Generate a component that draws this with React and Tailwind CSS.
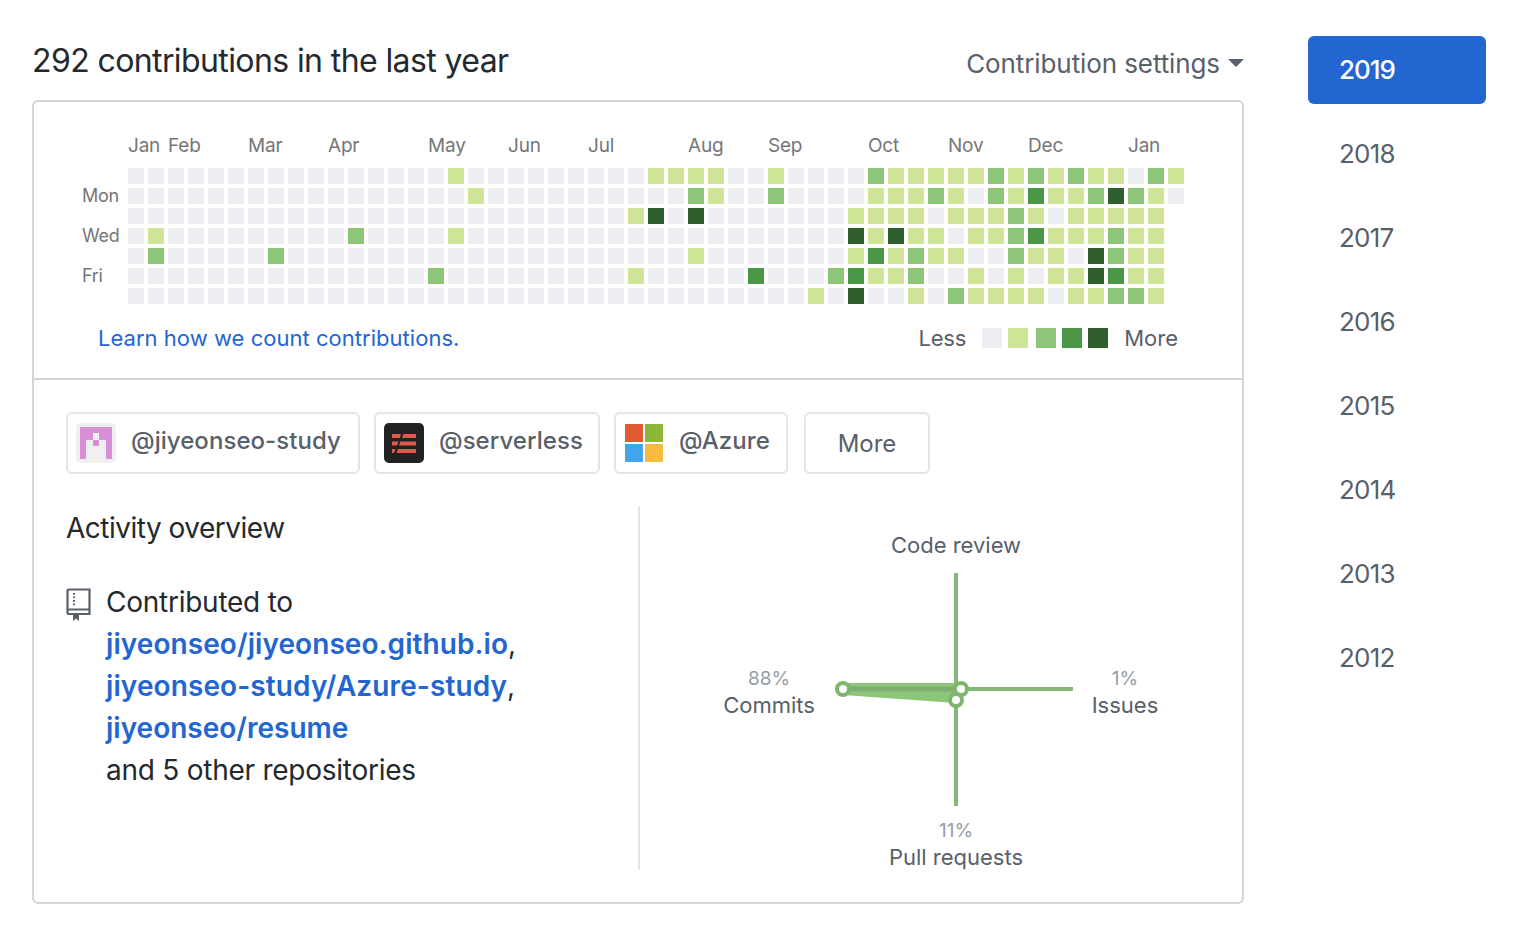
const LEVELS = ["bg-[#ecedf1]", "bg-[#cfe496]", "bg-[#8dc679]", "bg-[#4b9748]", "bg-[#2e5f2c]"];

const ROWS = [
  "0000000000000000100000000" + "0111100100" + "0021111121" + "21211021",
  "0000000000000000010000000" + "0002100200" + "0011121021" + "31124210",
  "0000000000000000000000000" + "1404000000" + "0111101112" + "1011111",
  "0100000000020000100000000" + "0000000000" + "0414110112" + "3111211",
  "0200000200000000000000000" + "0001000000" + "0131211002" + "1104211",
  "0000000000000002000000000" + "1000003000" + "2311200101" + "0114311",
  "0000000000000000000000000" + "0000000001" + "0400102111" + "1011221",
];

const MONTHS = [
  ["Jan", "w-[40px]"], ["Feb", "w-[80px]"], ["Mar", "w-[80px]"], ["Apr", "w-[100px]"],
  ["May", "w-[80px]"], ["Jun", "w-[80px]"], ["Jul", "w-[100px]"], ["Aug", "w-[80px]"],
  ["Sep", "w-[100px]"], ["Oct", "w-[80px]"], ["Nov", "w-[80px]"], ["Dec", "w-[100px]"], ["Jan", "w-[40px]"],
];

const DAYS = ["", "Mon", "", "Wed", "", "Fri", ""];
const YEARS = ["2018", "2017", "2016", "2015", "2014", "2013", "2012"];
const IDENT = ["11111", "11011", "10101", "10001", "10001"];

function Identicon() {
  return (
    <div className="w-[40px] h-[40px] rounded-[5px] bg-[#f0f0f0] p-[4px] grid grid-cols-5 grid-rows-5">
      {IDENT.join("").split("").map((c, i) => (
        <div key={i} className={c === "1" ? "bg-[#d98fd8]" : ""} />
      ))}
    </div>
  );
}

function ServerlessLogo() {
  return (
    <svg width="40" height="40" viewBox="0 0 40 40">
      <rect width="40" height="40" rx="5" fill="#222222" />
      <g fill="#e0594a">
        <path d="M8 11h9l-1.500 4H8z" />
        <path d="M19.500 11H32v4H18z" />
        <path d="M8 18.500h6.500L13 22.500H8z" />
        <path d="M16.500 18.500H32v4H15z" />
        <path d="M8 26h3.500L10 30H8z" />
        <path d="M14 26H32v4H12.500z" />
      </g>
    </svg>
  );
}

function MicrosoftLogo() {
  return (
    <div className="w-[40px] h-[40px] p-[1px] grid grid-cols-2 gap-[2px]">
      <div className="bg-[#e25a34]" />
      <div className="bg-[#8db63a]" />
      <div className="bg-[#45a4ec]" />
      <div className="bg-[#f7bb41]" />
    </div>
  );
}

function RepoIcon() {
  return (
    <svg width="26" height="34" viewBox="0 0 26 34" fill="none">
      <path d="M3 1.500H23.500V26H3C2 26 1.500 25.500 1.500 24.500V3C1.500 2 2 1.500 3 1.500Z" stroke="#586069" strokeWidth="2.200" />
      <path d="M1.500 21.500H23.500" stroke="#586069" strokeWidth="2" />
      <path d="M7 25H13V33L10 30.500L7 33Z" fill="#586069" />
      <path d="M8 5v1.800M8 8.500v1.800M8 12v1.800M8 15.500v1.800" stroke="#586069" strokeWidth="2" />
    </svg>
  );
}

function Radar() {
  return (
    <svg width="604" height="364" viewBox="0 0 604 364" className="block" fontFamily="Inter, 'Liberation Sans', sans-serif">
      <g stroke="#85b878" strokeWidth="4" fill="none">
        <path d="M316 67V300" />
        <path d="M203 183H433" />
      </g>
      <path d="M203 177 H321 V183 L316 197 L203 189 Z" fill="#8cc677" />
      <path d="M203 183H321" stroke="#7fae70" strokeWidth="5" />
      <circle cx="203" cy="183" r="6" fill="#fff" stroke="#7fb56f" strokeWidth="4" />
      <circle cx="321" cy="183" r="6" fill="#fff" stroke="#7fb56f" strokeWidth="4" />
      <circle cx="316" cy="194" r="6" fill="#fff" stroke="#7fb56f" strokeWidth="4" />
      <g textAnchor="middle" fontSize="22" fill="#586069">
        <text x="316" y="47">Code review</text>
        <text x="129" y="207">Commits</text>
        <text x="485" y="207">Issues</text>
        <text x="316" y="359">Pull requests</text>
      </g>
      <g textAnchor="middle" fontSize="19" fill="#959da5">
        <text x="129" y="179">88%</text>
        <text x="485" y="179">1%</text>
        <text x="316" y="331">11%</text>
      </g>
    </svg>
  );
}

function OrgButton({ logo, name, width }) {
  return (
    <div className={`h-[62px] ${width} border-2 border-[#e1e4e8] rounded-[6px] flex items-center gap-[15px] pl-[8px] text-[24px] font-medium tracking-[0.05px] text-[#586069]`}>
      {logo}
      <span className="pb-[4px]">{name}</span>
    </div>
  );
}

export default function App() {
  return (
    <div className="w-[1536px] h-[930px] bg-white flex pl-[32px] pt-[36px] text-[#24292e] font-['Inter','Liberation_Sans',sans-serif] overflow-hidden">
      <div className="w-[1212px] shrink-0">
        <div className="h-[64px] pb-[12px] flex items-center justify-between">
          <h2 className="text-[32px] font-normal leading-[50px] tracking-[-0.6px] pb-[2px]">292 contributions in the last year</h2>
          <div className="flex items-center gap-[8px] text-[26px] text-[#586069] tracking-[-0.1px] pt-[2px]">
            Contribution settings
            <span className="w-0 h-0 border-x-[8px] border-x-transparent border-t-[8px] border-t-[#586069]" />
          </div>
        </div>
        <div className="border-2 border-[#d1d5da] rounded-[6px] h-[804px]">
          <div className="h-[278px] border-b-2 border-[#d1d5da] pt-[29px] text-[#767676]">
            <div className="flex pl-[94px] h-[30px] items-center text-[19px] tracking-[-0.2px] mb-[7px]">
              {MONTHS.map(([m, w], i) => (
                <div key={i} className={w}>{m}</div>
              ))}
            </div>
            <div className="flex pl-[48px]">
              <div className="w-[46px] flex flex-col text-[18px] tracking-[-0.3px]">
                {DAYS.map((d, i) => (
                  <div key={i} className="h-[20px] leading-[16px] whitespace-nowrap">{d}</div>
                ))}
              </div>
              <div className="flex flex-col gap-[4px]">
                {ROWS.map((r, y) => (
                  <div key={y} className="flex gap-[4px]">
                    {r.split("").map((c, x) => (
                      <div key={x} className={`w-[16px] h-[16px] ${LEVELS[Number(c)]}`} />
                    ))}
                  </div>
                ))}
              </div>
            </div>
            <div className="flex items-center justify-between pl-[64px] pr-[64px] mt-[12px] h-[36px] text-[22px]">
              <a className="text-[#2366d1] tracking-[0.03px]">Learn how we count contributions.</a>
              <div className="flex items-center text-[#586069]">
                <span className="mr-[16px] tracking-[-0.2px]">Less</span>
                <div className="flex gap-[6px] mr-[16px]">
                  {LEVELS.map((l, i) => (
                    <div key={i} className={`w-[20px] h-[20px] ${l} ${i === 2 ? "ml-[2px]" : ""}`} />
                  ))}
                </div>
                <span>More</span>
              </div>
            </div>
          </div>
          <div className="pl-[32px] pt-[32px]">
            <div className="flex gap-[14px]">
              <OrgButton logo={<Identicon />} name="@jiyeonseo-study" width="w-[294px]" />
              <OrgButton logo={<ServerlessLogo />} name="@serverless" width="w-[226px]" />
              <OrgButton logo={<MicrosoftLogo />} name="@Azure" width="w-[174px]" />
              <div className="h-[62px] w-[126px] ml-[2px] border-2 border-[#e1e4e8] rounded-[6px] flex items-center justify-center text-[24px] text-[#586069] pt-[2px]">More</div>
            </div>
            <div className="flex mt-[32px]">
              <div className="w-[572px] shrink-0">
                <h3 className="text-[28px] font-normal leading-[44px] tracking-[-0.5px]">Activity overview</h3>
                <div className="flex mt-[31px]">
                  <div className="w-[40px] shrink-0 pt-[7px]"><RepoIcon /></div>
                  <div className="text-[28px] leading-[42px] tracking-[-0.25px]">
                    <div>Contributed to</div>
                    <div><a className="text-[#2366d1] font-semibold tracking-[0.07px]">jiyeonseo/jiyeonseo.github.io</a>,</div>
                    <div><a className="text-[#2366d1] font-semibold tracking-[0.1px]">jiyeonseo-study/Azure-study</a>,</div>
                    <div><a className="text-[#2366d1] font-semibold tracking-[0px]">jiyeonseo/resume</a></div>
                    <div>and 5 other repositories</div>
                  </div>
                </div>
              </div>
              <div className="border-l-2 border-[#e1e4e8] h-[364px]">
                <Radar />
              </div>
            </div>
          </div>
        </div>
      </div>
      <div className="ml-[64px] w-[178px] shrink-0 text-[26px] text-[#586069] tracking-[-0.8px]">
        <div className="h-[68px] rounded-[6px] bg-[#2366d1] text-white flex items-center pl-[31px] pb-[2px] font-medium tracking-[-1px]">2019</div>
        {YEARS.map((y) => (
          <div key={y} className="h-[84px] pl-[31px] pt-[16px] leading-[68px]">{y}</div>
        ))}
      </div>
    </div>
  );
}
